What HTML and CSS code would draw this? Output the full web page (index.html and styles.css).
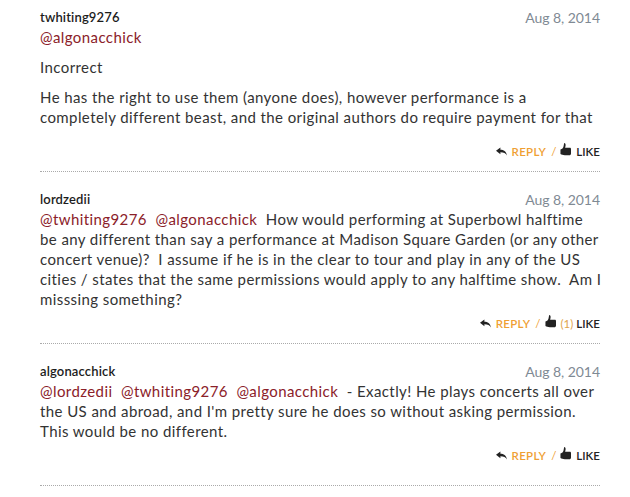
FILE: index.html
```html
<!DOCTYPE html>
<html lang="en">
<head>
<meta charset="utf-8">
<title>Comments</title>
<link rel="stylesheet" href="styles.css">
</head>
<body>
<svg class="defs" width="0" height="0" aria-hidden="true">
  <symbol id="reply" viewBox="0 0 12 9"><path d="M0 3.800 4.800 0v2.500c3.600 0 6.200 1.600 7.200 6.300C10.600 6.400 8.500 5.400 4.800 5.400v2.200z"/></symbol>
  <symbol id="thumb" viewBox="0 0 12 14"><path d="M4.600 0C6 .2 6.400 1.800 6 3.300L5.600 5.200h5c.9 0 1.400.6 1.400 1.400v4.700c0 1.200-.7 2-2 2H5.200C3.200 13.300 1.800 12.800.5 12V7C2.400 6.600 3.400 5.200 3.900 3.400 4.200 2.200 4.300 1 4.600 0z"/></symbol>
</svg>
<main class="thread">
  <article class="comment">
    <header class="head"><span class="name">twhiting9276</span><time class="date">Aug 8, 2014</time></header>
    <div class="body">
      <p><a class="mention">@algonacchick</a></p>
      <p>Incorrect</p>
      <p class="last">He has the right to use them (anyone does), however performance is a<br>completely different beast, and the original authors do require payment for that</p>
    </div>
    <footer class="actions"><svg class="ico-reply"><use href="#reply"/></svg><span class="reply">REPLY</span><span class="slash">/</span><svg class="ico-thumb"><use href="#thumb"/></svg><span class="like">LIKE</span></footer>
  </article>
  <article class="comment">
    <header class="head"><span class="name">lordzedii</span><time class="date">Aug 8, 2014</time></header>
    <div class="body">
      <p><a class="mention">@twhiting9276</a> &nbsp;<a class="mention">@algonacchick</a> &nbsp;How would performing at Superbowl halftime<br>be any different than say a performance at Madison Square Garden (or any other<br>concert venue)? &nbsp;I assume if he is in the clear to tour and play in any of the US<br>cities / states that the same permissions would apply to any halftime show. &nbsp;Am I<br>misssing something?</p>
    </div>
    <footer class="actions"><svg class="ico-reply"><use href="#reply"/></svg><span class="reply">REPLY</span><span class="slash">/</span><svg class="ico-thumb"><use href="#thumb"/></svg><span class="count">(1)</span><span class="like">LIKE</span></footer>
  </article>
  <article class="comment">
    <header class="head"><span class="name">algonacchick</span><time class="date">Aug 8, 2014</time></header>
    <div class="body">
      <p><a class="mention">@lordzedii</a> &nbsp;<a class="mention">@twhiting9276</a> &nbsp;<a class="mention">@algonacchick</a> &nbsp;- Exactly! He plays concerts all over<br>the US and abroad, and I'm pretty sure he does so without asking permission.<br>This would be no different.</p>
    </div>
    <footer class="actions"><svg class="ico-reply"><use href="#reply"/></svg><span class="reply">REPLY</span><span class="slash">/</span><svg class="ico-thumb"><use href="#thumb"/></svg><span class="like">LIKE</span></footer>
  </article>
</main>
</body>
</html>
```
FILE: styles.css
```css
html, body { margin: 0; padding: 0; background: #fff; }
body { font-family: Lato, "Open Sans", sans-serif; color: #333; height: 497px; overflow: hidden; }
.defs { position: absolute; }
.thread { padding: 0 30px 0 40px; }
.comment { padding-top: 20px; border-bottom: 1px dotted #aaa; padding-bottom: 13px; }
.comment:first-child { padding-top: 10px; }
.comment:last-child { padding-bottom: 23px; }
.head { display: flex; justify-content: space-between; align-items: center; height: 14px; margin-bottom: 3px; }
.name { font-size: 13px; font-weight: 600; color: #1c1c1c; letter-spacing: .15px; }
.date { font-size: 14px; color: #7f8a94; letter-spacing: -.05px; }
.body { font-size: 15px; line-height: 20px; letter-spacing: .41px; white-space: nowrap; }
.body p { margin: 0 0 10px; }
.body p:last-child { margin-bottom: 0; }
.body p.last { margin-bottom: 10px; }
.mention { color: #8b2129; }
.actions { display: flex; justify-content: flex-end; align-items: center; height: 14px; padding-top: 7px; font-size: 11.500px; font-weight: 600; }
.ico-reply { width: 11px; height: 9px; fill: #222; margin-right: 5px; }
.ico-thumb { width: 11px; height: 13px; fill: #222; margin: -4px 5px 0 0; }
.reply { color: #ef9f33; letter-spacing: .3px; }
.slash { color: #ef9f33; margin: 0 4px 0 5px; font-weight: 400; }
.count { color: #e0a34d; font-weight: 400; margin-right: 3px; }
.like { color: #222; letter-spacing: 0; }
```
